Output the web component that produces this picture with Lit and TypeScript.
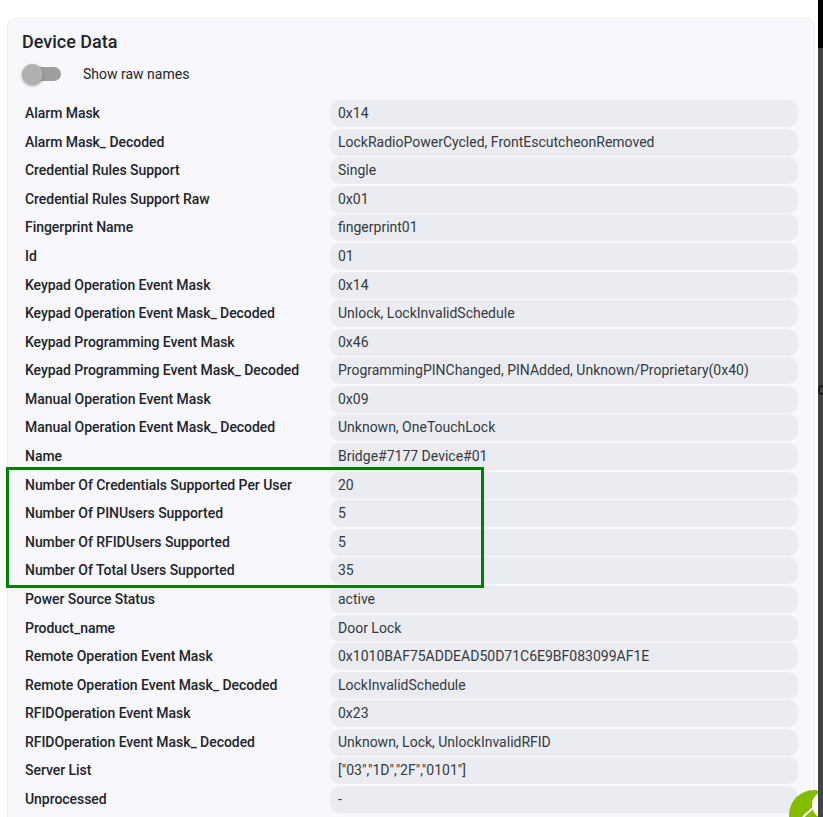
import { LitElement, html, css } from 'lit';
import { customElement } from 'lit/decorators.js';

const rows: [string, string][] = [
  ['Alarm Mask', '0x14'],
  ['Alarm Mask_ Decoded', 'LockRadioPowerCycled, FrontEscutcheonRemoved'],
  ['Credential Rules Support', 'Single'],
  ['Credential Rules Support Raw', '0x01'],
  ['Fingerprint Name', 'fingerprint01'],
  ['Id', '01'],
  ['Keypad Operation Event Mask', '0x14'],
  ['Keypad Operation Event Mask_ Decoded', 'Unlock, LockInvalidSchedule'],
  ['Keypad Programming Event Mask', '0x46'],
  ['Keypad Programming Event Mask_ Decoded', 'ProgrammingPINChanged, PINAdded, Unknown/Proprietary(0x40)'],
  ['Manual Operation Event Mask', '0x09'],
  ['Manual Operation Event Mask_ Decoded', 'Unknown, OneTouchLock'],
  ['Name', 'Bridge#7177 Device#01'],
  ['Number Of Credentials Supported Per User', '20'],
  ['Number Of PINUsers Supported', '5'],
  ['Number Of RFIDUsers Supported', '5'],
  ['Number Of Total Users Supported', '35'],
  ['Power Source Status', 'active'],
  ['Product_name', 'Door Lock'],
  ['Remote Operation Event Mask', '0x1010BAF75ADDEAD50D71C6E9BF083099AF1E'],
  ['Remote Operation Event Mask_ Decoded', 'LockInvalidSchedule'],
  ['RFIDOperation Event Mask', '0x23'],
  ['RFIDOperation Event Mask_ Decoded', 'Unknown, Lock, UnlockInvalidRFID'],
  ['Server List', '["03","1D","2F","0101"]'],
  ['Unprocessed', '-'],
];

@customElement('app-root')
export class AppRoot extends LitElement {
  static styles = css`
    :host {
      display: block;
      position: relative;
      height: 817px;
      overflow: hidden;
      background: #fff;
      font-family: Roboto, 'Noto Sans', sans-serif;
      color: #212529;
    }
    .page {
      padding: 18px 8px 0 7px;
    }
    .card {
      background: #f7f7fc;
      border: 1px solid #eeeef2;
      border-radius: 8px;
      padding: 10px 17px 40px 14px;
    }
    h2 {
      margin: 0;
      font-size: 18px;
      font-weight: 500;
      line-height: 26px;
      color: #212529;
    }
    .toggle-row {
      display: flex;
      align-items: center;
      margin-top: 8px;
      height: 22px;
      font-size: 14px;
    }
    .toggle {
      position: relative;
      width: 39px;
      height: 14px;
      margin-right: 22px;
      border-radius: 7px;
      background: #9e9e9e;
    }
    .knob {
      position: absolute;
      left: 0;
      top: -3.5px;
      width: 21px;
      height: 21px;
      border-radius: 50%;
      background: #b0b0b0;
      box-shadow: 0 1px 3px rgba(0, 0, 0, 0.35);
    }
    .rows {
      display: flex;
      flex-direction: column;
      gap: 1.58px;
      margin-top: 15.1px;
    }
    .row {
      display: grid;
      grid-template-columns: 305px 468px;
      align-items: center;
      padding-left: 3px;
    }
    .label {
      padding-bottom: 1px;
      font-size: 14px;
      font-weight: 500;
      letter-spacing: -0.05px;
      color: #212529;
    }
    .value {
      height: 27px;
      line-height: 27px;
      padding-left: 8px;
      border-radius: 10px;
      background: #ebecf1;
      font-size: 14px;
      color: #333a40;
    }
    .highlight {
      position: absolute;
      left: 6px;
      top: 467px;
      width: 472px;
      height: 115px;
      border: 3px solid #008000;
      pointer-events: none;
    }
    .backdrop {
      position: absolute;
      top: 0;
      right: 0;
      bottom: 0;
      width: 5px;
      background: linear-gradient(#000 0 48px, #444 48px);
    }
    .backdrop-mark {
      position: absolute;
      left: 0;
      top: 385px;
      width: 5px;
      height: 10px;
      box-sizing: border-box;
      border: 2px solid #1c1c1c;
      border-right: 0;
      border-radius: 4px 0 0 4px;
    }
    .fab {
      position: absolute;
      left: 789px;
      top: 790px;
      width: 50px;
      height: 50px;
      border-radius: 50%;
      background: #84bd00;
      overflow: hidden;
    }
    .fab svg {
      display: block;
    }
  `;

  render() {
    return html`
      <div class="page">
        <section class="card">
          <h2>Device Data</h2>
          <div class="toggle-row">
            <div class="toggle"><div class="knob"></div></div>
            <span>Show raw names</span>
          </div>
          <div class="rows">
            ${rows.map(
              ([label, value]) => html`
                <div class="row">
                  <div class="label">${label}</div>
                  <div class="value">${value}</div>
                </div>
              `
            )}
          </div>
        </section>
      </div>
      <div class="highlight"></div>
      <div class="fab">
        <svg width="50" height="50" viewBox="0 0 50 50">
          <circle cx="37" cy="15" r="14" fill="#fff" />
          <path d="M14 27 L25 17" stroke="#fff" stroke-width="2" fill="none" />
        </svg>
      </div>
      <div class="backdrop"><div class="backdrop-mark"></div></div>
    `;
  }
}
